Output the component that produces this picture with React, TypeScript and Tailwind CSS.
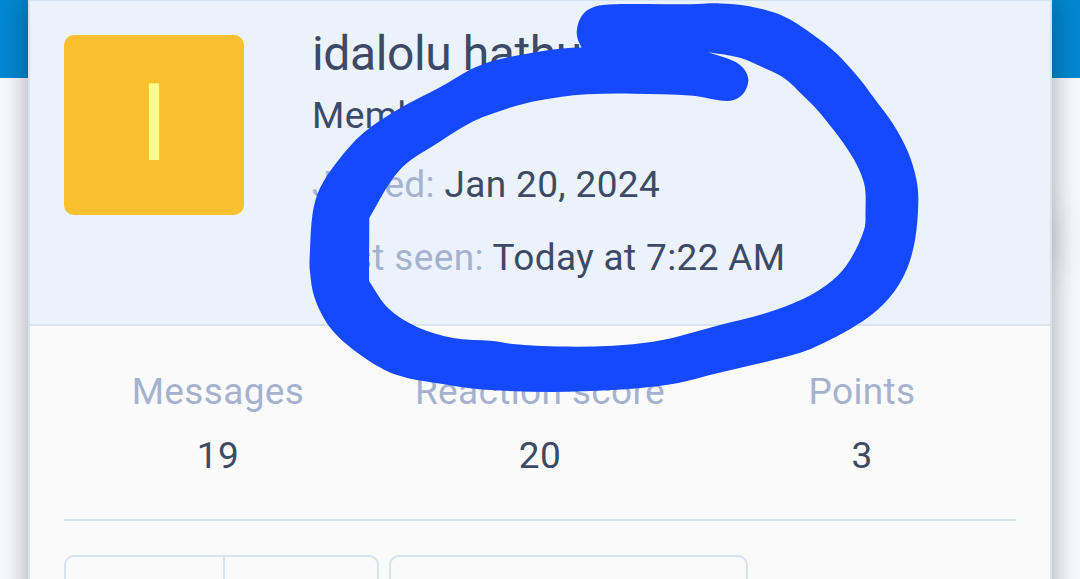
interface Stat {
  label: string;
  value: string;
}

type Point = [number, number];

const stats: Stat[] = [
  { label: "Messages", value: "19" },
  { label: "Reaction score", value: "20" },
  { label: "Points", value: "3" },
];

// Edges of the marker stroke; each run is smooth, runs meet in corners
const markerEdges: Point[][] = [
  [
    [581.7, 47.6], [578, 40], [576.8, 31], [580, 19], [588, 9.8], [603, 5], [640, 4],
    [690, 4.2], [720, 3.4], [748, 6], [783, 16], [812, 34], [836, 53], [858, 77],
    [874, 98], [893, 124], [908, 152], [916.5, 180], [918.3, 203], [915, 240],
    [906.5, 270], [890, 297], [863, 321], [810, 349.3], [773, 360], [717, 373.3],
    [677, 383.3], [640, 388], [613, 390], [553, 392], [490, 390], [447, 384.7],
    [397, 375], [363, 356.7], [332, 330], [315, 299], [309.8, 270], [310, 250],
    [312.7, 213], [320, 188], [337, 162], [363, 133.3], [400, 108.3], [440, 87.3],
    [470, 69.8], [490, 61.8], [507, 57.5], [540, 51.5], [562, 48.5], [581.7, 47.6],
  ],
  [
    [708, 52.3], [733, 60.8], [744, 69], [748.3, 81], [742, 95], [728, 101],
    [693, 95.7], [633, 93.7], [587, 94.3], [560, 97], [523, 104], [483, 117],
    [463, 127], [433, 146], [407, 163], [391, 181], [369.3, 218],
  ],
  [[369.3, 218], [369, 281]],
  [
    [369, 281], [388, 308], [417, 327], [453, 338], [493, 341], [513, 344],
    [560, 346.5], [613, 345.7], [653, 341.7], [680, 336], [720, 325], [763, 314],
    [803, 299], [833, 280], [850, 260], [864, 230], [865.5, 213], [864, 183],
    [850, 153], [820, 113], [803, 95.5], [784, 78], [760, 66], [740, 57.7],
    [708, 52.3],
  ],
];

// Control point offset at a point, along the line between its neighbours
function tangent(prev: Point, next: Point, length: number): Point {
  const dx = next[0] - prev[0];
  const dy = next[1] - prev[1];
  const scale = length / 3 / (Math.hypot(dx, dy) || 1);
  return [dx * scale, dy * scale];
}

function smooth(points: Point[], start: boolean) {
  let d = start ? `M${points[0].join(" ")}` : "";
  for (let i = 0; i < points.length - 1; i++) {
    const a = points[i - 1] ?? points[i];
    const b = points[i];
    const c = points[i + 1];
    const e = points[i + 2] ?? c;
    const length = Math.hypot(c[0] - b[0], c[1] - b[1]);
    const t1 = tangent(a, c, length);
    const t2 = tangent(b, e, length);
    d += `C${b[0] + t1[0]} ${b[1] + t1[1]} ${c[0] - t2[0]} ${c[1] - t2[1]} ${c[0]} ${c[1]}`;
  }
  return d;
}

function MarkerCircle() {
  const outer = smooth(markerEdges[0], true) + "Z";
  const inner = markerEdges.slice(1).map((run, i) => smooth(run, i === 0)).join("") + "Z";
  return (
    <svg className="absolute inset-0" width="1080" height="579" viewBox="0 0 1080 579">
      <path d={outer + inner} fill="#1549ff" fillRule="evenodd" />
    </svg>
  );
}

function MemberHeader() {
  return (
    <div className="flex h-[325px] gap-[68px] border-b-2 border-[#d8e4f2] bg-[#ebf2fc] px-[34px] pt-[34px]">
      <div className="flex h-[180px] w-[180px] shrink-0 items-center justify-center rounded-[10px] bg-[#fbc02d] pb-[5px] text-[108px] leading-none text-[#ffff8d]">
        I
      </div>
      <div className="whitespace-nowrap text-[37px] leading-[50px] tracking-[0.36px] text-[#3d4a66]">
        <h4 className="-mt-[13px] text-[48px] leading-[64px] tracking-[-0.4px]">idalolu hathu</h4>
        <p className="mt-[5px]">Member</p>
        <p className="mt-[19px]">
          <span className="text-[#a5b2cf]">Joined:</span> Jan 20, 2024
        </p>
        <p className="mt-[23px]">
          <span className="text-[#a5b2cf]">Last seen:</span> Today at 7:22 AM
        </p>
      </div>
    </div>
  );
}

export default function App() {
  return (
    <div className="relative h-[579px] w-[1080px] overflow-hidden bg-[#f7f9fe] font-['Roboto',sans-serif]">
      <div className="h-[78px] bg-[#0288d1]" />
      <div className="absolute top-[215px] left-[1030px] h-[50px] w-[20px] shadow-[0_0_36px_rgba(40,60,90,0.22)]" />

      <div className="relative mx-[28px] -mt-[79px] h-[700px] border-2 border-[#d6e3f3] bg-[#fafafa] shadow-[0_0_26px_rgba(0,0,0,0.35)]">
        <MemberHeader />
        <div className="px-[34px]">
          <div className="grid grid-cols-[308px_336px_308px] pt-[41px] text-center text-[37px] leading-[50px] tracking-[0.36px]">
            {stats.map((stat) => (
              <div key={stat.label}>
                <div className="text-[#a5b2cf]">{stat.label}</div>
                <div className="mt-[14px] text-[#3d4a66]">{stat.value}</div>
              </div>
            ))}
          </div>
          <hr className="mt-[38px] border-t-2 border-[#d8e4f0]" />
          <div className="mt-[34px] flex gap-[10px]">
            <div className="flex h-[72px] w-[315px] rounded-[10px] border-2 border-[#d6e2f0]">
              <div className="w-[159px] border-r-2 border-[#d6e2f0]" />
            </div>
            <div className="h-[72px] w-[359px] rounded-[10px] border-2 border-[#d6e2f0]" />
          </div>
        </div>
      </div>

      <MarkerCircle />
    </div>
  );
}
